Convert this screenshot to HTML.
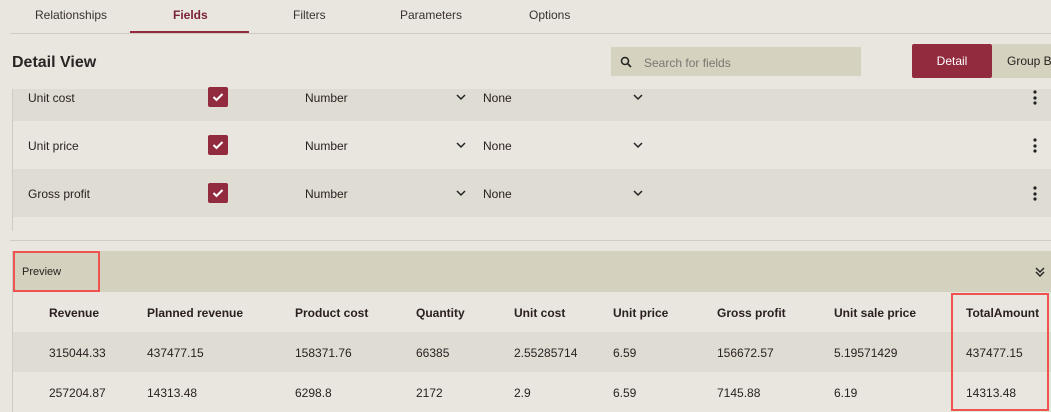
<!DOCTYPE html>
<html><head><meta charset="utf-8"><style>
*{margin:0;padding:0;box-sizing:border-box}
body{width:1051px;height:412px;overflow:hidden;background:#e9e6df;font-family:"Liberation Sans",sans-serif;color:#2a2020;font-size:12px;position:relative}
.a{position:absolute}
.tab{position:absolute;top:8px;font-size:12px;color:#3a3030}
.row{position:absolute;left:13px;width:1038px}
.cb{position:absolute;left:195px;width:20px;height:20px;background:#922b3e;border-radius:2px}
.cb svg{position:absolute;left:4px;top:5px}
.t{position:absolute;font-size:12px}
.h{position:absolute;font-weight:bold;font-size:12px;top:306px}
.c{position:absolute;font-size:12px}
</style></head><body>
<div class="tab" style="left:35px">Relationships</div>
<div class="tab" style="left:173px;font-weight:bold;color:#7a2236">Fields</div>
<div class="tab" style="left:293px">Filters</div>
<div class="tab" style="left:400px">Parameters</div>
<div class="tab" style="left:529px">Options</div>
<div class="a" style="left:10px;top:33px;width:1041px;height:1px;background:#d0ccc4"></div>
<div class="a" style="left:130px;top:31px;width:119px;height:2px;background:#922b3e"></div>
<div class="a" style="left:12px;top:54px;font-size:16px;font-weight:bold;color:#2a2424">Detail View</div>
<div class="a" style="left:611px;top:47px;width:250px;height:29px;background:#d5d2bf"></div>
<svg class="a" style="left:620px;top:56px" width="12" height="12" viewBox="0 0 12 12"><circle cx="5" cy="5" r="3.5" fill="none" stroke="#222" stroke-width="1.5"/><path d="M7.5 7.5L11 11" stroke="#222" stroke-width="1.6"/></svg>
<div class="a" style="left:644px;top:56px;color:#7a7670">Search for fields</div>
<div class="a" style="left:912px;top:44px;width:80px;height:34px;background:#922b3e;border-radius:2px;color:#fff;text-align:center;line-height:34px">Detail</div>
<div class="a" style="left:992px;top:44px;width:59px;height:34px;background:#d5d2bf;line-height:34px;padding-left:15px;white-space:nowrap;overflow:hidden">Group By</div>
<div class="a" style="left:12px;top:89px;width:1px;height:142px;background:#cfcbc2"></div>
<div class="row" style="top:89px;height:32px;background:#dfdcd4"></div>
<div class="row" style="top:169px;height:48px;background:#dfdcd4"></div>
<div class="cb" style="left:208px;top:87px"><svg width="12" height="10"><path d="M1.5 5L4.5 8L10.5 2" stroke="#fff" stroke-width="2" fill="none"/></svg></div>
<div class="t" style="left:28px;top:91px">Unit cost</div>
<div class="t" style="left:305px;top:91px">Number</div>
<div class="t" style="left:483px;top:91px">None</div>
<div class="cb" style="left:208px;top:135px"><svg width="12" height="10"><path d="M1.5 5L4.5 8L10.5 2" stroke="#fff" stroke-width="2" fill="none"/></svg></div>
<div class="t" style="left:28px;top:139px">Unit price</div>
<div class="t" style="left:305px;top:139px">Number</div>
<div class="t" style="left:483px;top:139px">None</div>
<div class="cb" style="left:208px;top:183px"><svg width="12" height="10"><path d="M1.5 5L4.5 8L10.5 2" stroke="#fff" stroke-width="2" fill="none"/></svg></div>
<div class="t" style="left:28px;top:187px">Gross profit</div>
<div class="t" style="left:305px;top:187px">Number</div>
<div class="t" style="left:483px;top:187px">None</div>
<svg class="a" style="left:0;top:0" width="1051" height="240">
<g stroke="#222" stroke-width="1.5" fill="none">
<path d="M457 95l4 4 4-4M634 95l4 4 4-4"/>
<path d="M457 143l4 4 4-4M634 143l4 4 4-4"/>
<path d="M457 191l4 4 4-4M634 191l4 4 4-4"/>
</g>
<g fill="#222"><circle cx="1035" cy="92" r="1.6"/><circle cx="1035" cy="98" r="1.6"/><circle cx="1035" cy="103" r="1.6"/>
<circle cx="1035" cy="140" r="1.6"/><circle cx="1035" cy="146" r="1.6"/><circle cx="1035" cy="151" r="1.6"/>
<circle cx="1035" cy="188" r="1.6"/><circle cx="1035" cy="194" r="1.6"/><circle cx="1035" cy="199" r="1.6"/></g>
</svg>
<div class="a" style="left:10px;top:240px;width:1041px;height:1px;background:#d0ccc4"></div>
<div class="a" style="left:12px;top:251px;width:1px;height:161px;background:#cfcbc2"></div>
<div class="a" style="left:13px;top:251px;width:1038px;height:41px;background:#d4d1be"></div>
<div class="a" style="left:13px;top:251px;width:87px;height:41px;border:2px solid #ef5350"></div>
<div class="a" style="left:22px;top:266px;font-size:11px">Preview</div>
<svg class="a" style="left:1034px;top:266px" width="12" height="12"><path d="M2 2l4 4 4-4M2 6l4 4 4-4" stroke="#222" stroke-width="1.4" fill="none"/></svg>
<div class="a" style="left:13px;top:332px;width:1038px;height:40px;background:#dfdcd4"></div>
<div class="h" style="left:49px">Revenue</div>
<div class="h" style="left:147px">Planned revenue</div>
<div class="h" style="left:295px">Product cost</div>
<div class="h" style="left:416px">Quantity</div>
<div class="h" style="left:514px">Unit cost</div>
<div class="h" style="left:613px">Unit price</div>
<div class="h" style="left:717px">Gross profit</div>
<div class="h" style="left:834px">Unit sale price</div>
<div class="h" style="left:966px">TotalAmount</div>
<div class="c" style="left:49px;top:346px">315044.33</div>
<div class="c" style="left:147px;top:346px">437477.15</div>
<div class="c" style="left:295px;top:346px">158371.76</div>
<div class="c" style="left:416px;top:346px">66385</div>
<div class="c" style="left:514px;top:346px">2.55285714</div>
<div class="c" style="left:613px;top:346px">6.59</div>
<div class="c" style="left:717px;top:346px">156672.57</div>
<div class="c" style="left:834px;top:346px">5.19571429</div>
<div class="c" style="left:966px;top:346px">437477.15</div>
<div class="c" style="left:49px;top:386px">257204.87</div>
<div class="c" style="left:147px;top:386px">14313.48</div>
<div class="c" style="left:295px;top:386px">6298.8</div>
<div class="c" style="left:416px;top:386px">2172</div>
<div class="c" style="left:514px;top:386px">2.9</div>
<div class="c" style="left:613px;top:386px">6.59</div>
<div class="c" style="left:717px;top:386px">7145.88</div>
<div class="c" style="left:834px;top:386px">6.19</div>
<div class="c" style="left:966px;top:386px">14313.48</div>
<div class="a" style="left:951px;top:293px;width:98px;height:118px;border:2px solid #ef5350"></div>
</body></html>
